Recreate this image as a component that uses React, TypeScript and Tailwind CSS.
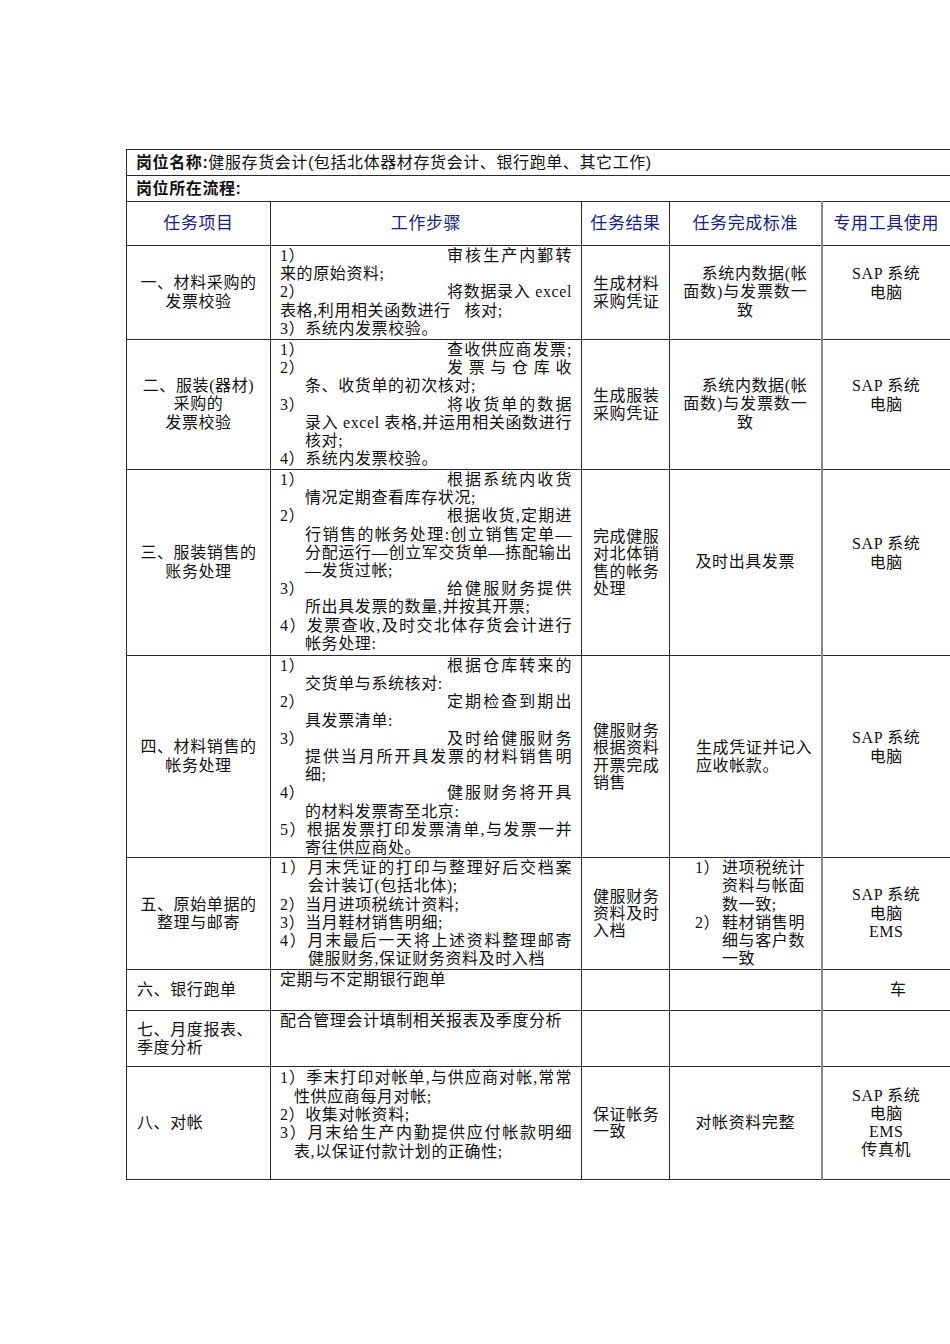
import type { ReactNode } from 'react';

// Cell text helpers for the job description table
const serif = "font-['Liberation_Serif','Noto_Sans_CJK_SC',serif]";
const sans = "font-['Liberation_Sans','Noto_Sans_CJK_SC',sans-serif]";
const td = 'border border-[#2a2a2a] p-0';

function Tab({ n, r }: { n: string; r: string }) {
    return (
        <div className="flex">
            <span>{n}</span>
            <span className="ml-auto w-[125px] [text-align-last:justify]">{r}</span>
        </div>
    );
}

function Ln({ children, i, j }: { children: ReactNode; i?: string; j?: boolean }) {
    return <div className={`${i ?? ''} ${j ? '[text-align-last:justify]' : ''}`}>{children}</div>;
}

function Steps({ children }: { children: ReactNode }) {
    return <div className="px-[9px] pt-[1px] leading-[18.2px] whitespace-nowrap">{children}</div>;
}

function Center({ lines, extra }: { lines: string[]; extra?: boolean }) {
    return (
        <div className={`text-center leading-[18.2px] whitespace-nowrap ${extra ? 'pb-[18px]' : ''}`}>
            {lines.map(l => <div key={l}>{l}</div>)}
        </div>
    );
}

function Result({ lines }: { lines: string[] }) {
    return (
        <div className="pl-[11px] leading-[17.2px] whitespace-nowrap">
            {lines.map(l => <div key={l}>{l}</div>)}
        </div>
    );
}

function Standard() {
    return (
        <div className="w-[124px] mx-auto leading-[18.2px] whitespace-nowrap">
            <div className="text-right">系统内数据(帐</div>
            <div className="[text-align-last:justify]">面数)与发票数一</div>
            <div className="text-center">致</div>
        </div>
    );
}

export default function App() {
    return (
        <div className={`bg-white min-h-[1344px] pt-[149px] pl-[126px] text-[16px] tracking-[0.6px] text-[#111] ${serif}`}>
            <table className="table-fixed border-collapse w-[824px]">
                <colgroup>
                    <col className="w-[144px]" />
                    <col className="w-[311px]" />
                    <col className="w-[88px]" />
                    <col className="w-[152px]" />
                    <col className="w-[129px]" />
                </colgroup>
                <tbody>
                    <tr className="h-[26px]">
                        <td colSpan={5} className={`${td} pl-[9px] leading-[24px] ${sans}`}>
                            <span className="font-bold">岗位名称:</span>
                            <span>健服存货会计(包括北体器材存货会计、银行跑单、其它工作)</span>
                        </td>
                    </tr>
                    <tr className="h-[26px]">
                        <td colSpan={5} className={`${td} pl-[9px] leading-[24px] font-bold ${sans}`}>岗位所在流程:</td>
                    </tr>
                    <tr className={`h-[44px] text-[17px] text-[#1c1c86] ${sans}`}>
                        <td className={`${td} text-center`}>任务项目</td>
                        <td className={`${td} text-center`}>工作步骤</td>
                        <td className={`${td} text-center`}>任务结果</td>
                        <td className={`${td} text-center`}>任务完成标准</td>
                        <td className={`${td} text-center border-l-2 border-l-[#8a8a8a]`}>专用工具使用</td>
                    </tr>

                    {/* 一 */}
                    <tr className="h-[94px]">
                        <td className={`${td} align-middle`}><Center lines={['一、材料采购的', '发票校验']} /></td>
                        <td className={`${td} align-top`}>
                            <Steps>
                                <Tab n="1）" r="审核生产内鄞转" />
                                <Ln>来的原始资料;</Ln>
                                <Tab n="2）" r="将数据录入 excel" />
                                <Ln>表格,利用相关函数进行<span className="ml-[14px]">核对;</span></Ln>
                                <Ln>3）系统内发票校验。</Ln>
                            </Steps>
                        </td>
                        <td className={`${td} align-middle`}><Result lines={['生成材料', '采购凭证']} /></td>
                        <td className={`${td} align-middle`}><Standard /></td>
                        <td className={`${td} align-middle border-l-2 border-l-[#8a8a8a]`}><Center lines={['SAP 系统', '电脑']} extra /></td>
                    </tr>

                    {/* 二 */}
                    <tr className="h-[130px]">
                        <td className={`${td} align-middle`}><Center lines={['二、服装(器材)', '采购的', '发票校验']} /></td>
                        <td className={`${td} align-top`}>
                            <Steps>
                                <Tab n="1）" r="查收供应商发票;" />
                                <Tab n="2）" r="发票与仓库收" />
                                <Ln i="pl-[25px]">条、收货单的初次核对;</Ln>
                                <Tab n="3）" r="将收货单的数据" />
                                <Ln i="pl-[25px]" j>录入 excel 表格,并运用相关函数进行</Ln>
                                <Ln i="pl-[25px]">核对;</Ln>
                                <Ln>4）系统内发票校验。</Ln>
                            </Steps>
                        </td>
                        <td className={`${td} align-middle`}><Result lines={['生成服装', '采购凭证']} /></td>
                        <td className={`${td} align-middle`}><Standard /></td>
                        <td className={`${td} align-middle border-l-2 border-l-[#8a8a8a]`}><Center lines={['SAP 系统', '电脑']} extra /></td>
                    </tr>

                    {/* 三 */}
                    <tr className="h-[186px]">
                        <td className={`${td} align-middle`}><Center lines={['三、服装销售的', '账务处理']} /></td>
                        <td className={`${td} align-top`}>
                            <Steps>
                                <Tab n="1）" r="根据系统内收货" />
                                <Ln i="pl-[25px]">情况定期查看库存状况;</Ln>
                                <Tab n="2）" r="根据收货,定期进" />
                                <Ln i="pl-[25px]" j>行销售的帐务处理:创立销售定单—</Ln>
                                <Ln i="pl-[25px]" j>分配运行—创立军交货单—拣配输出</Ln>
                                <Ln i="pl-[25px]">—发货过帐;</Ln>
                                <Tab n="3）" r="给健服财务提供" />
                                <Ln i="pl-[25px]">所出具发票的数量,并按其开票;</Ln>
                                <Ln j>4）发票查收,及时交北体存货会计进行</Ln>
                                <Ln i="pl-[25px]">帐务处理:</Ln>
                            </Steps>
                        </td>
                        <td className={`${td} align-middle`}><Result lines={['完成健服', '对北体销', '售的帐务', '处理']} /></td>
                        <td className={`${td} align-middle`}><Center lines={['及时出具发票']} /></td>
                        <td className={`${td} align-middle border-l-2 border-l-[#8a8a8a]`}><Center lines={['SAP 系统', '电脑']} extra /></td>
                    </tr>

                    {/* 四 */}
                    <tr className="h-[200px]">
                        <td className={`${td} align-middle`}><Center lines={['四、材料销售的', '帐务处理']} /></td>
                        <td className={`${td} align-top`}>
                            <Steps>
                                <Tab n="1）" r="根据仓库转来的" />
                                <Ln i="pl-[25px]">交货单与系统核对:</Ln>
                                <Tab n="2）" r="定期检查到期出" />
                                <Ln i="pl-[25px]">具发票清单:</Ln>
                                <Tab n="3）" r="及时给健服财务" />
                                <Ln i="pl-[25px]" j>提供当月所开具发票的材料销售明</Ln>
                                <Ln i="pl-[25px]">细;</Ln>
                                <Tab n="4）" r="健服财务将开具" />
                                <Ln i="pl-[25px]">的材料发票寄至北京:</Ln>
                                <Ln j>5）根据发票打印发票清单,与发票一并</Ln>
                                <Ln i="pl-[25px]">寄往供应商处。</Ln>
                            </Steps>
                        </td>
                        <td className={`${td} align-middle`}><Result lines={['健服财务', '根据资料', '开票完成', '销售']} /></td>
                        <td className={`${td} align-middle`}>
                            <div className="pl-[26px] leading-[17.2px]">
                                <div>生成凭证并记入</div>
                                <div>应收帐款。</div>
                            </div>
                        </td>
                        <td className={`${td} align-middle border-l-2 border-l-[#8a8a8a]`}><Center lines={['SAP 系统', '电脑']} extra /></td>
                    </tr>

                    {/* 五 */}
                    <tr className="h-[112px]">
                        <td className={`${td} align-middle`}><Center lines={['五、原始单据的', '整理与邮寄']} /></td>
                        <td className={`${td} align-top`}>
                            <Steps>
                                <Ln j>1）月末凭证的打印与整理好后交档案</Ln>
                                <Ln i="pl-[28px]">会计装订(包括北体);</Ln>
                                <Ln>2）当月进项税统计资料;</Ln>
                                <Ln>3）当月鞋材销售明细;</Ln>
                                <Ln j>4）月末最后一天将上述资料整理邮寄</Ln>
                                <Ln i="pl-[28px]">健服财务,保证财务资料及时入档</Ln>
                            </Steps>
                        </td>
                        <td className={`${td} align-middle`}><Result lines={['健服财务', '资料及时', '入档']} /></td>
                        <td className={`${td} align-top`}>
                            <div className="pl-[25px] pt-[1px] leading-[18.2px] whitespace-nowrap">
                                <div className="flex"><span className="w-[27px]">1）</span><span>进项税统计</span></div>
                                <div className="pl-[27px]">资料与帐面</div>
                                <div className="pl-[27px]">数一致;</div>
                                <div className="flex"><span className="w-[27px]">2）</span><span>鞋材销售明</span></div>
                                <div className="pl-[27px]">细与客户数</div>
                                <div className="pl-[27px]">一致</div>
                            </div>
                        </td>
                        <td className={`${td} align-middle border-l-2 border-l-[#8a8a8a]`}><Center lines={['SAP 系统', '电脑', 'EMS']} /></td>
                    </tr>

                    {/* 六 */}
                    <tr className="h-[41px]">
                        <td className={`${td} align-middle pl-[10px]`}>六、银行跑单</td>
                        <td className={`${td} align-top`}><Steps>定期与不定期银行跑单</Steps></td>
                        <td className={td}></td>
                        <td className={td}></td>
                        <td className={`${td} align-middle border-l-2 border-l-[#8a8a8a] text-center pl-[24px]`}>车</td>
                    </tr>

                    {/* 七 */}
                    <tr className="h-[56px]">
                        <td className={`${td} align-middle pl-[10px] leading-[17.5px]`}>
                            <div>七、月度报表、</div>
                            <div>季度分析</div>
                        </td>
                        <td className={`${td} align-top`}><Steps>配合管理会计填制相关报表及季度分析</Steps></td>
                        <td className={td}></td>
                        <td className={td}></td>
                        <td className={`${td} border-l-2 border-l-[#8a8a8a]`}></td>
                    </tr>

                    {/* 八 */}
                    <tr className="h-[113px]">
                        <td className={`${td} align-middle pl-[10px]`}>八、对帐</td>
                        <td className={`${td} align-top`}>
                            <div className="px-[9px] pt-[2px] leading-[18.4px] whitespace-nowrap">
                                <Ln j>1）季末打印对帐单,与供应商对帐,常常</Ln>
                                <Ln i="pl-[14px]">性供应商每月对帐;</Ln>
                                <Ln>2）收集对帐资料;</Ln>
                                <Ln j>3）月末给生产内勤提供应付帐款明细</Ln>
                                <Ln i="pl-[14px]">表,以保证付款计划的正确性;</Ln>
                            </div>
                        </td>
                        <td className={`${td} align-middle`}><Result lines={['保证帐务', '一致']} /></td>
                        <td className={`${td} align-middle`}><Center lines={['对帐资料完整']} /></td>
                        <td className={`${td} align-middle border-l-2 border-l-[#8a8a8a]`}><Center lines={['SAP 系统', '电脑', 'EMS', '传真机']} /></td>
                    </tr>
                </tbody>
            </table>
        </div>
    );
}
